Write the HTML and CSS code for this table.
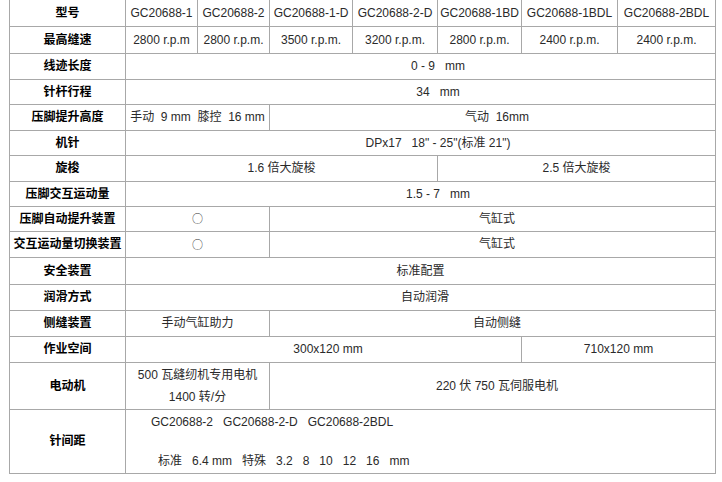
FILE: index.html
```html
<!DOCTYPE html>
<html lang="zh">
<head>
<meta charset="utf-8">
<title>GC20688 规格</title>
<link rel="stylesheet" href="styles.css">
</head>
<body>
<table class="spec">
  <colgroup>
    <col class="c1"><col class="c2"><col class="c3"><col class="c4"><col class="c5"><col class="c6"><col class="c7"><col class="c8">
  </colgroup>
  <tr class="r26">
    <th>型号</th>
    <td>GC20688-1</td><td>GC20688-2</td><td>GC20688-1-D</td><td>GC20688-2-D</td><td>GC20688-1BD</td><td>GC20688-1BDL</td><td>GC20688-2BDL</td>
  </tr>
  <tr class="r27">
    <th>最高缝速</th>
    <td>2800 r.p.m</td><td>2800 r.p.m.</td><td>3500 r.p.m.</td><td>3200 r.p.m.</td><td>2800 r.p.m.</td><td>2400 r.p.m.</td><td>2400 r.p.m.</td>
  </tr>
  <tr class="r26">
    <th>线迹长度</th>
    <td colspan="7" class="shift">0 - 9&nbsp;&nbsp; mm</td>
  </tr>
  <tr class="r25">
    <th>针杆行程</th>
    <td colspan="7" class="shift">34&nbsp;&nbsp; mm</td>
  </tr>
  <tr class="r26">
    <th>压脚提升高度</th>
    <td colspan="2">手动&nbsp; 9 mm&nbsp; 膝控&nbsp; 16 mm</td>
    <td colspan="5" class="nudge">气动&nbsp; 16mm</td>
  </tr>
  <tr class="r25">
    <th>机针</th>
    <td colspan="7" class="shift">DPx17&nbsp;&nbsp; 18" - 25"(标准 21")</td>
  </tr>
  <tr class="r26">
    <th>旋梭</th>
    <td colspan="4">1.6 倍大旋梭</td>
    <td colspan="3">2.5 倍大旋梭</td>
  </tr>
  <tr class="r25">
    <th>压脚交互运动量</th>
    <td colspan="7" class="shift">1.5 - 7&nbsp;&nbsp; mm</td>
  </tr>
  <tr class="r25">
    <th>压脚自动提升装置</th>
    <td colspan="2"><span class="circ">○</span></td>
    <td colspan="5" class="nudge">气缸式</td>
  </tr>
  <tr class="r26">
    <th>交互运动量切换装置</th>
    <td colspan="2"><span class="circ">○</span></td>
    <td colspan="5" class="nudge">气缸式</td>
  </tr>
  <tr class="r27">
    <th>安全装置</th>
    <td colspan="7">标准配置</td>
  </tr>
  <tr class="r26">
    <th>润滑方式</th>
    <td colspan="7" class="nudge">自动润滑</td>
  </tr>
  <tr class="r26">
    <th>侧缝装置</th>
    <td colspan="2">手动气缸助力</td>
    <td colspan="5" class="nudge">自动侧缝</td>
  </tr>
  <tr class="r26">
    <th>作业空间</th>
    <td colspan="5" class="nudge">300x120 mm</td>
    <td colspan="2">710x120 mm</td>
  </tr>
  <tr class="r47">
    <th>电动机</th>
    <td colspan="2" class="two">500 瓦缝纫机专用电机<br>1400 转/分</td>
    <td colspan="5" class="nudge">220 伏 750 瓦伺服电机</td>
  </tr>
  <tr class="r64">
    <th>针间距</th>
    <td colspan="7" class="pitch">
      <div class="pline l1">GC20688-2&nbsp;&nbsp; GC20688-2-D&nbsp;&nbsp; GC20688-2BDL</div>
      <div class="pline">&nbsp;</div>
      <div class="pline l2">标准&nbsp;&nbsp; 6.4 mm&nbsp;&nbsp; 特殊&nbsp;&nbsp; 3.2&nbsp;&nbsp; 8&nbsp;&nbsp; 10&nbsp;&nbsp; 12&nbsp;&nbsp; 16&nbsp;&nbsp; mm</div>
    </td>
  </tr>
</table>
</body>
</html>
```

FILE: styles.css
```css
html, body {
  margin: 0;
  padding: 0;
  background: #ffffff;
}

body {
  padding-left: 9px;
  font-family: "Liberation Sans", "Noto Sans CJK SC", sans-serif;
  font-size: 12px;
  color: #333333;
}

.spec {
  border-collapse: collapse;
  table-layout: fixed;
  width: 707px;
}

.c1 { width: 116px; }
.c2 { width: 72px; }
.c3 { width: 72px; }
.c4 { width: 83px; }
.c5 { width: 85px; }
.c6 { width: 84px; }
.c7 { width: 96px; }
.c8 { width: 98px; }

.spec th,
.spec td {
  border: 1px solid #a8a8a8;
  padding: 0 1px;
  text-align: center;
  vertical-align: middle;
  white-space: nowrap;
  line-height: 16px;
}

.spec tr:first-child th,
.spec tr:first-child td {
  border-top: none;
}

.spec th {
  font-weight: bold;
  color: #000000;
}

.spec td {
  color: #2a2a2a;
}

.r25 { height: 25px; }
.r26 { height: 26px; }
.r27 { height: 27px; }
.r47 { height: 47px; }
.r64 { height: 64px; }

.spec td.shift {
  padding-left: 36px;
}

.spec td.nudge {
  padding-left: 10px;
}

.spec td.two {
  line-height: 22px;
}

.circ {
  font-family: "Noto Sans CJK SC", sans-serif;
  font-size: 11px;
  color: #333333;
}

.spec td.pitch {
  text-align: left;
  vertical-align: top;
  padding: 3px 0 0 0;
}

.pline {
  line-height: 19.5px;
}

.l1 { padding-left: 25px; }
.l2 { padding-left: 32px; }
```
